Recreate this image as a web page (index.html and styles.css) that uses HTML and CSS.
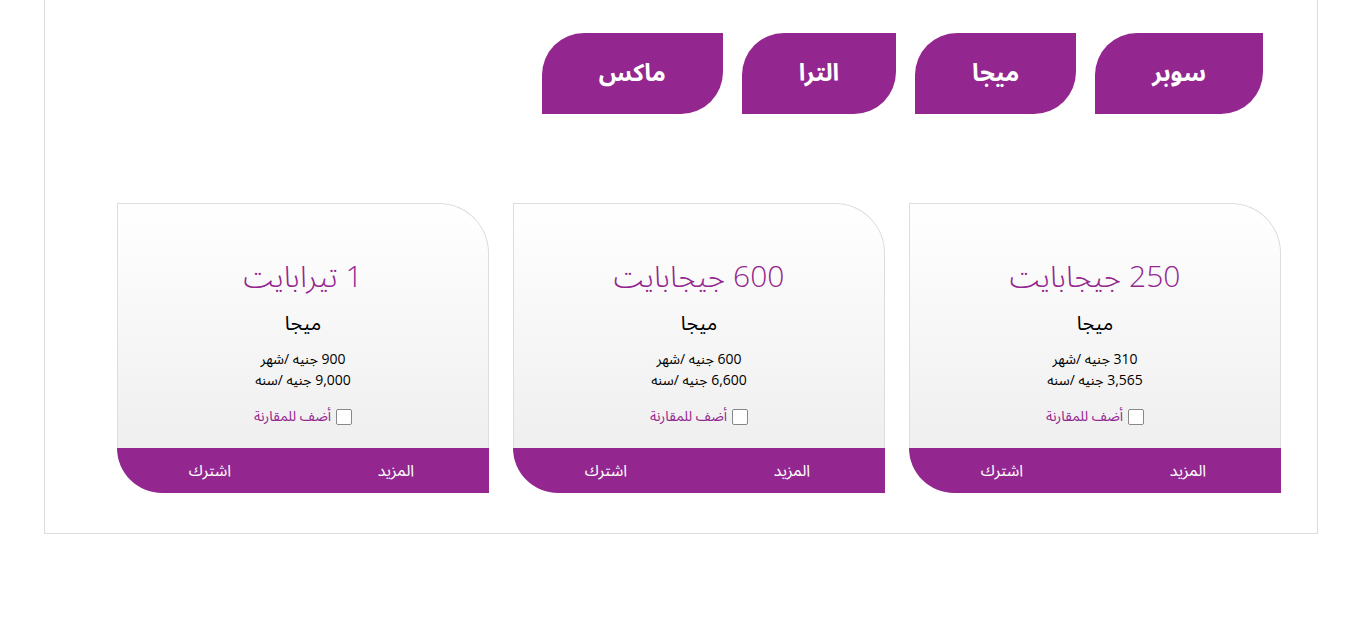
FILE: index.html
```html
<!DOCTYPE html>
<html lang="ar" dir="rtl">
<head>
  <meta charset="UTF-8">
  <title>باقات الإنترنت</title>
  <link rel="stylesheet" href="styles.css">
</head>
<body>

  <div class="plans-box">
    <div class="tabs">
      <a class="tab" href="#">سوبر</a>
      <a class="tab" href="#">ميجا</a>
      <a class="tab" href="#">الترا</a>
      <a class="tab" href="#">ماكس</a>
    </div>

    <div class="card-container">
      <div class="card">
        <div class="card-body">
          <h3 class="quota">250 جيجابايت</h3>
          <h4 class="plan-name">ميجا</h4>
          <p class="price">310 جنيه /شهر</p>
          <p class="price">3,565 جنيه /سنه</p>
          <label class="compare"><input type="checkbox"> أضف للمقارنة</label>
        </div>
        <div class="card-actions">
          <a href="#">المزيد</a>
          <a href="#">اشترك</a>
        </div>
      </div>

      <div class="card">
        <div class="card-body">
          <h3 class="quota">600 جيجابايت</h3>
          <h4 class="plan-name">ميجا</h4>
          <p class="price">600 جنيه /شهر</p>
          <p class="price">6,600 جنيه /سنه</p>
          <label class="compare"><input type="checkbox"> أضف للمقارنة</label>
        </div>
        <div class="card-actions">
          <a href="#">المزيد</a>
          <a href="#">اشترك</a>
        </div>
      </div>

      <div class="card">
        <div class="card-body">
          <h3 class="quota">1 تيرابايت</h3>
          <h4 class="plan-name">ميجا</h4>
          <p class="price">900 جنيه /شهر</p>
          <p class="price">9,000 جنيه /سنه</p>
          <label class="compare"><input type="checkbox"> أضف للمقارنة</label>
        </div>
        <div class="card-actions">
          <a href="#">المزيد</a>
          <a href="#">اشترك</a>
        </div>
      </div>
    </div>
  </div>

</body>
</html>
```

FILE: styles.css
```css
body {
  margin: 0;
  font-family: 'Open Sans', 'Noto Sans Arabic', 'DejaVu Sans', sans-serif;
  background-color: #ffffff;
  color: #000;
}

.plans-box {
  margin: 0 52px 0 44px;
  border: 1px solid #dddddd;
  border-top: none;
  padding: 33px 36px 40px 72px;
}

.tabs {
  display: flex;
  gap: 19px;
  padding-right: 18px;
}

.tab {
  display: flex;
  align-items: center;
  justify-content: center;
  height: 81px;
  padding: 0 57px;
  background-color: #93278f;
  color: #ffffff;
  font-size: 24px;
  font-weight: bold;
  text-decoration: none;
  border-radius: 42px 0 42px 0;
}

.card-container {
  display: flex;
  gap: 24px;
  margin-top: 89px;
}

.card {
  width: 372px;
  display: flex;
  flex-direction: column;
}

.card-body {
  height: 245px;
  box-sizing: border-box;
  border: 1px solid #dddddd;
  border-bottom: none;
  border-radius: 0 50px 0 0;
  background: linear-gradient(to bottom, #ffffff, #efefef);
  text-align: center;
  padding-top: 52px;
}

.quota {
  margin: 0;
  font-size: 30px;
  font-weight: 300;
  line-height: 40px;
  color: #93278f;
}

.plan-name {
  margin: 14px 0 12px;
  font-size: 20px;
  font-weight: normal;
  line-height: 26px;
}

.price {
  margin: 0;
  font-size: 14px;
  line-height: 21px;
}

.compare {
  display: inline-flex;
  align-items: center;
  gap: 5px;
  margin-top: 12px;
  font-size: 14px;
  color: #93278f;
}

.compare input {
  appearance: none;
  width: 16px;
  height: 16px;
  margin: 0;
  border: 1.5px solid #888;
  border-radius: 2px;
  background: #fff;
}

.card-actions {
  display: flex;
  height: 45px;
  background-color: #93278f;
  border-radius: 0 0 0 50px;
}

.card-actions a {
  flex: 1;
  display: flex;
  align-items: center;
  justify-content: center;
  color: #ffffff;
  font-size: 16px;
  text-decoration: none;
}
```
